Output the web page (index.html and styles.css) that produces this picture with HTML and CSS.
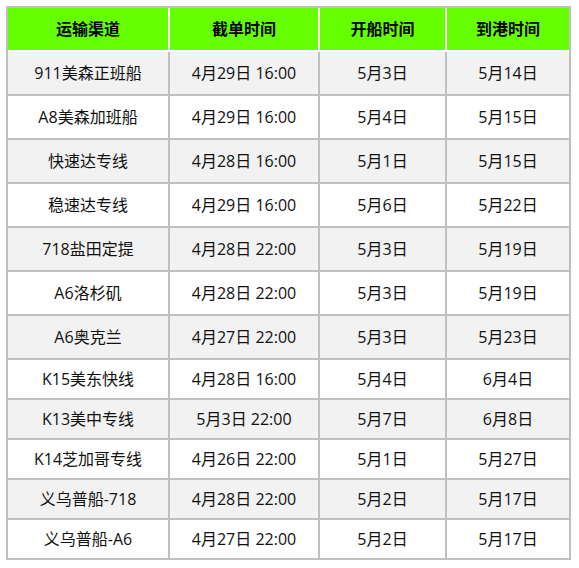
FILE: index.html
```html
<!DOCTYPE html>
<html lang="zh-CN">
<head>
<meta charset="utf-8">
<title>运输渠道</title>
<link rel="stylesheet" href="styles.css">
</head>
<body>
<div class="wrap">
<table class="sched">
  <thead>
    <tr><th class="c1">运输渠道</th><th class="c2">截单时间</th><th class="c3">开船时间</th><th class="c4">到港时间</th></tr>
  </thead>
  <tbody>
    <tr class="tall alt"><td>911美森正班船</td><td>4月29日 16:00</td><td>5月3日</td><td>5月14日</td></tr>
    <tr class="tall"><td>A8美森加班船</td><td>4月29日 16:00</td><td>5月4日</td><td>5月15日</td></tr>
    <tr class="tall alt"><td>快速达专线</td><td>4月28日 16:00</td><td>5月1日</td><td>5月15日</td></tr>
    <tr class="tall"><td>稳速达专线</td><td>4月29日 16:00</td><td>5月6日</td><td>5月22日</td></tr>
    <tr class="tall alt"><td>718盐田定提</td><td>4月28日 22:00</td><td>5月3日</td><td>5月19日</td></tr>
    <tr class="tall"><td>A6洛杉矶</td><td>4月28日 22:00</td><td>5月3日</td><td>5月19日</td></tr>
    <tr class="tall alt"><td>A6奥克兰</td><td>4月27日 22:00</td><td>5月3日</td><td>5月23日</td></tr>
    <tr class="short"><td>K15美东快线</td><td>4月28日 16:00</td><td>5月4日</td><td>6月4日</td></tr>
    <tr class="short alt"><td>K13美中专线</td><td>5月3日 22:00</td><td>5月7日</td><td>6月8日</td></tr>
    <tr class="short"><td>K14芝加哥专线</td><td>4月26日 22:00</td><td>5月1日</td><td>5月27日</td></tr>
    <tr class="short alt"><td>义乌普船-718</td><td>4月28日 22:00</td><td>5月2日</td><td>5月17日</td></tr>
    <tr class="short"><td>义乌普船-A6</td><td>4月27日 22:00</td><td>5月2日</td><td>5月17日</td></tr>
  </tbody>
</table>
</div>
</body>
</html>
```

FILE: styles.css
```css
html, body {
  margin: 0;
  padding: 0;
  background: #ffffff;
}

.wrap {
  padding: 6px;
}

.sched {
  box-sizing: border-box;
  width: 565px;
  table-layout: fixed;
  border-collapse: separate;
  border-spacing: 0;
  border: 2px solid #c0c0c0;
  border-bottom: none;
  font-family: "Open Sans", "Noto Sans CJK SC", sans-serif;
  font-size: 16px;
  color: #111111;
}

.sched th,
.sched td {
  box-sizing: border-box;
  padding: 0;
  text-align: center;
  vertical-align: middle;
  line-height: 20px;
  white-space: nowrap;
}

.sched th {
  height: 44px;
  background: #66ff00;
  color: #000000;
  font-weight: bold;
  border-right: 2px solid #ffffff;
  border-bottom: 2px solid #ffffff;
}

.sched th.c1 { width: 162px; }
.sched th.c2 { width: 150px; }
.sched th.c3 { width: 127px; }
.sched th.c4 { width: 122px; border-right: none; }

.sched td {
  background: #ffffff;
  border-right: 2px solid #c0c0c0;
  border-bottom: 2px solid #c0c0c0;
}

.sched td:last-child {
  border-right: none;
}

.sched tr.alt td {
  background: #f2f2f2;
}

.sched tr.tall td {
  height: 44px;
}

.sched tr.short td {
  height: 40px;
}
```
